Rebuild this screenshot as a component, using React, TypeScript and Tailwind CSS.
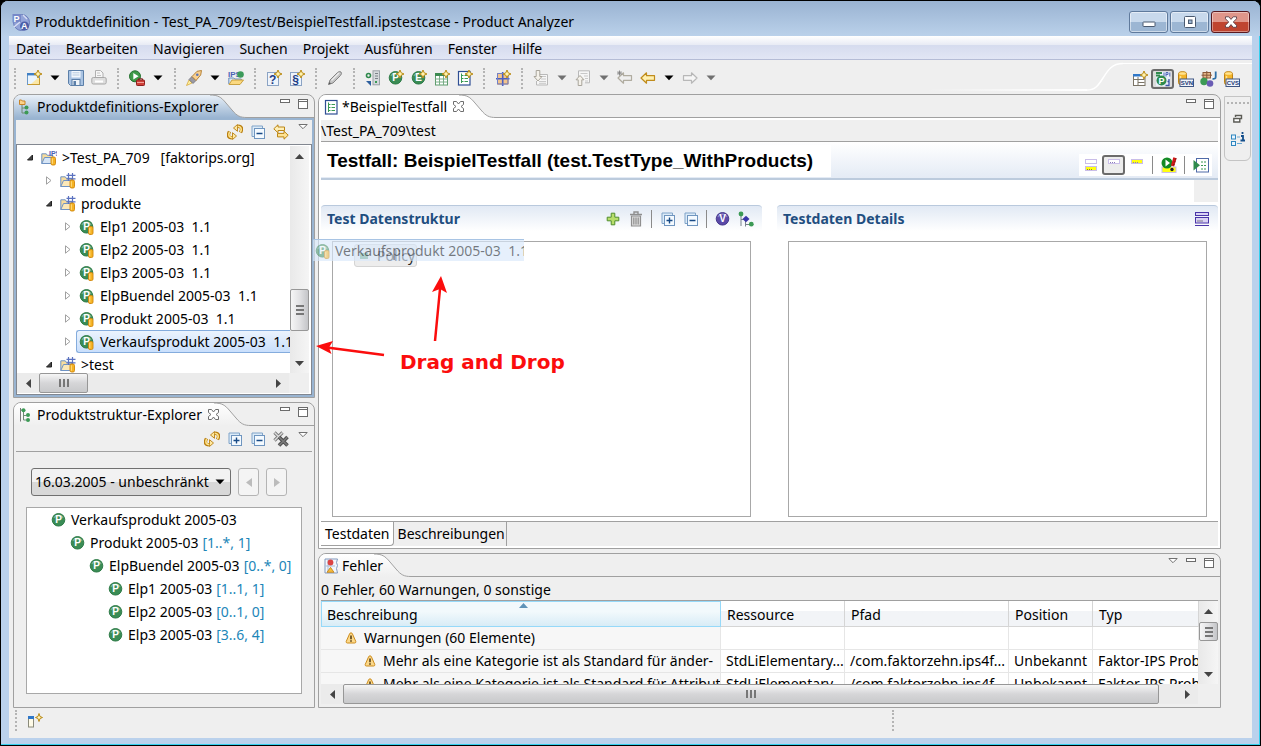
import { useId, type ReactNode } from "react";

/* ---------- icon helpers ---------- */

function Svg({ children, w = 16, h = 16 }: { children: ReactNode; w?: number; h?: number }) {
  return (
    <svg width={w} height={h} viewBox={`0 0 ${w} ${h}`} fill="none" aria-hidden="true" className="shrink-0">
      {children}
    </svg>
  );
}

const Spark = () => (
  <path d="M12 0 13.200 2.800 16 4 13.200 5.200 12 8 10.800 5.200 8 4 10.800 2.800Z" fill="#fff3b0" stroke="#b98a14" strokeWidth="1" />
);

const Cylinder = ({ x = 9, y = 7 }: { x?: number; y?: number }) => (
  <g transform={`translate(${x} ${y})`}>
    <rect x=".5" y=".5" width="4.500" height="8" rx="1.500" fill="#f5b324" stroke="#d0860c" strokeWidth=".9" />
    <path d="M1.800 1.800v5.500" stroke="#ffe08a" />
  </g>
);

function Ball({ letter, color = "#3a8c55", dark = "#26753f", children }: { letter: string; color?: string; dark?: string; children?: ReactNode }) {
  return (
    <Svg>
      <circle cx="7.500" cy="7.800" r="6.300" fill={color} stroke={dark} strokeWidth=".9" />
      <path d="M3 6a5 5 0 0 1 9 0" stroke="#fff" strokeOpacity=".3" strokeWidth="1.400" />
      <text x="7.500" y="11.300" textAnchor="middle" fontSize="10" fontWeight="700" fontFamily="Liberation Sans, sans-serif" fill="#fff">
        {letter}
      </text>
      {children}
    </Svg>
  );
}

const NewWindowIcon = () => (
  <Svg>
    <rect x="1.500" y="4.500" width="12" height="10" fill="#eaf4fd" stroke="#6a98c8" />
    <path d="M2 14.500h11.500V8" stroke="#c79a30" />
    <rect x="1" y="3" width="10" height="2.400" fill="#3f7fc4" />
    <path d="M5 14l8-7v7z" fill="#fbe7a6" />
    <Spark />
  </Svg>
);
const SaveIcon = () => (
  <Svg>
    <path d="M.5 .5h15v15h-13l-2-2z" fill="#a9c3e2" stroke="#5b7fa8" />
    <rect x="3.500" y="1" width="9" height="6.500" fill="#f3f8fd" />
    <path d="M4.500 2.800h7M4.500 5h7" stroke="#b6c9de" />
    <rect x="4" y="9.500" width="8" height="6" fill="#eef3f8" stroke="#5b7fa8" />
    <rect x="5.500" y="11" width="2.500" height="4" fill="#5b7fa8" />
  </Svg>
);
const PrintIcon = () => (
  <Svg>
    <path d="M4.500 7V.5h5l2.500 2.500V7" fill="#f6f6f6" stroke="#b0b0b0" />
    <path d="M6 3h3M6 5.500h4" stroke="#c4c4c4" />
    <rect x=".8" y="7.500" width="14.400" height="6.500" rx="1.500" fill="#dedede" stroke="#a8a8a8" />
    <path d="M4 11.500h8" stroke="#fff" strokeWidth="2" />
  </Svg>
);
const RunIcon = () => (
  <Svg>
    <circle cx="6" cy="6.300" r="5.500" fill="#3f9a48" stroke="#23702e" />
    <path d="M4.300 3 9.500 6.300 4.300 9.600z" fill="#fff" />
    <path d="M9.500 10V8.800h4V10" stroke="#7c1c1c" />
    <rect x="7.500" y="10" width="8" height="5.500" rx=".8" fill="#cf4038" stroke="#8f2020" />
    <path d="M8 12.500h7" stroke="#f0a09a" />
  </Svg>
);
const RocketIcon = () => (
  <Svg>
    <path d="M.5 15.500 3 10l3 3z" fill="#fff2a0" stroke="#d8a93c" strokeWidth=".8" />
    <path d="M3 9.500 6 6.500 10 10.500 7 13.500z" fill="#9a9aa4" stroke="#6d6d76" strokeWidth=".8" />
    <path d="M6 6.500 11 1.300 15.500.5l-.8 4.500L10 10.500z" fill="#f8d090" stroke="#b07a2c" strokeWidth=".9" />
    <circle cx="11.300" cy="4.700" r="1.300" fill="#5b74b8" />
  </Svg>
);
const IpsOpenIcon = () => (
  <Svg>
    <text x="0" y="7" fontSize="8" fontWeight="700" fontFamily="Liberation Sans, sans-serif" fill="#4a62b4">IPS</text>
    <circle cx="12.500" cy="4.500" r="3.300" fill="#3c9a5a" />
    <path d="M.8 14V8h5l1 1h6.500v2" fill="#d9e6f4" stroke="#5b84b6" strokeWidth=".9" />
    <path d="M1 14.500 4 10h11.500L12 14.500z" fill="#fbd980" stroke="#c49a34" strokeWidth=".9" />
  </Svg>
);
const LetterDoc = ({ letter }: { letter: string }) => (
  <Svg>
    <rect x="1.500" y="2.500" width="11" height="13" fill="#eef4fc" stroke="#8ba3c4" />
    <text x="6.700" y="13.500" textAnchor="middle" fontSize="12" fontWeight="700" fontFamily="Liberation Sans, sans-serif" fill="#1f3f86">{letter}</text>
    <Spark />
  </Svg>
);
const PenIcon = () => (
  <Svg>
    <path d="M1.500 14.500 3 10 10.500 2.500q2-1.800 3.500-.5 1.300 1.500-.5 3.500L6 13z" fill="#c4c4c4" stroke="#858585" />
    <path d="M4.500 10.500 12 3" stroke="#eee" strokeWidth="1.200" />
    <path d="M1.500 14.500l2.500-.9-1.400-1.500z" fill="#555" />
  </Svg>
);
const ServerIcon = () => (
  <Svg>
    <rect x="8" y=".8" width="6.500" height="14" fill="#d5d9dc" stroke="#9ca2a8" />
    <path d="M10 3.500h3M10 6h3M10 8.500h3" stroke="#7b8288" />
    <path d="M10 11h2v2h-2z" fill="#3a9a55" />
    <circle cx="3.500" cy="5.500" r="2" stroke="#2f8a4d" strokeWidth="1.600" />
    <path d="M1 11h5v5z" fill="#2d5f9e" />
  </Svg>
);
const TableIcon = () => (
  <Svg>
    <rect x="1.500" y="3.500" width="12" height="11.500" fill="#fff" stroke="#5c9c6c" />
    <rect x="1" y="3" width="13" height="3" fill="#3c8a50" />
    <path d="M1.500 9h12M1.500 12h12M5.500 6v9M9.500 6v9" stroke="#79ad86" />
    <Spark />
  </Svg>
);
const FormIcon = ({ spark = false }: { spark?: boolean }) => (
  <Svg>
    <rect x="1.500" y="1.500" width="11.500" height="13.500" fill="#fff" stroke="#2f4f94" strokeWidth="1.200" />
    <path d="M4.500 3.500v9.500M4.500 5.500h2M4.500 8.500h2M4.500 11.500h2" stroke="#3a9a55" />
    <path d="M7.500 5.500h3.500M7.500 8.500h3.500M7.500 11.500h3.500" stroke="#3a9a55" strokeWidth="1.200" />
    {spark && <Spark />}
  </Svg>
);
const GridIcon = () => (
  <Svg>
    <rect x="2.500" y="3.500" width="10.500" height="10.500" fill="#f3c48c" stroke="#c98a50" />
    <path d="M7.700 2v14M1 8.800h13.500" stroke="#4a5fc0" strokeWidth="1.600" />
    <path d="M2.500 3.500h10.500v10.500H2.500z" stroke="#6f80cc" />
    <Spark />
  </Svg>
);
const DocArrow = ({ up = false }: { up?: boolean }) => (
  <Svg>
    <path d={up ? "M3.500 7V.8h11v12H10" : "M6 4.500h8.500V15H3.500V11"} fill="#f6f6f6" stroke="#b9b9b9" />
    <path d={up ? "M5.500 3.500h7M9 6h4M10 8.500h3M10 11h3" : "M8 6.500h5M8 9h5M6 11.500h7M6 13.300h7"} stroke="#c8c8c8" />
    <path d={up ? "M5 5.500 9 9.800H6.800V15.500H3.200V9.800H1z" : "M3.200 .5h3.600v6H9L5 11 1 6.500h2.200z"} fill="#f4f1ea" stroke="#a8a49a" />
  </Svg>
);
const Arrow = ({ dir, color, fill, star }: { dir: "l" | "r"; color: string; fill: string; star?: boolean }) => (
  <Svg>
    <path d={dir === "l" ? "M1 8 6.500 2.800v2.900h8v4.600h-8v2.900z" : "M15 8 9.500 2.800v2.900h-8v4.600h8v2.900z"} fill={fill} stroke={color} strokeWidth="1.200" strokeLinejoin="round" />
    {star && <path d="M2.500 .5v5M0 3h5M.8 1.300l3.400 3.400M4.200 1.300.8 4.700" stroke="#808080" strokeWidth=".9" />}
  </Svg>
);
const PerspectiveIcon = () => (
  <Svg>
    <rect x="1.500" y="3.500" width="11.500" height="11" fill="#fff" stroke="#7b7466" />
    <rect x="1" y="3" width="9" height="2.500" fill="#2f77c8" />
    <path d="M2 8.500h10.500M6 6v8.500M6 11.500h6.500" stroke="#7b7466" />
    <Spark />
  </Svg>
);
const ProductPerspective = () => (
  <Svg>
    <rect x="1" y="1" width="14" height="14" fill="#e8effa" />
    <path d="M1 2h6M1 4.500h4" stroke="#2f8a4d" strokeWidth="1.800" />
    <path d="M9 1.500v4M11 5.500V1.500h2v2h-2M14.800 1.500v4" stroke="#5068b8" />
    <circle cx="6.500" cy="9.500" r="5" fill="#2f8a4d" />
    <text x="6.500" y="12.800" textAnchor="middle" fontSize="9" fontWeight="700" fontFamily="Liberation Sans, sans-serif" fill="#fff">P</text>
    <path d="M14 8v6.500h-3.500M14 10.500h-1.500" stroke="#3c53a4" strokeWidth="1.300" />
  </Svg>
);
const DbIcon = ({ label }: { label: string }) => (
  <Svg w={17}>
    <rect x="1.500" y=".8" width="8" height="13" rx="2.500" fill="#f4b52a" stroke="#c08212" />
    <ellipse cx="5.500" cy="2.500" rx="3.500" ry="1.300" fill="#ffe28e" />
    <path d="M3.500 5v7" stroke="#ffe28e" strokeWidth="1.500" />
    <rect x="3" y="8" width="13.500" height="7.500" fill="#f0f4fb" stroke="#3f5684" />
    <text x="9.800" y="14" textAnchor="middle" fontSize="6" fontWeight="700" fontFamily="Liberation Sans, sans-serif" fill="#1d3a74">{label}</text>
  </Svg>
);
const JavaIcon = () => (
  <Svg w={17}>
    <rect x="3" y="1.500" width="7.500" height="5.500" fill="#e6b98c" stroke="#8a5a3a" />
    <path d="M6.800 0v8M1.500 4.200H12" stroke="#8a5a3a" />
    <circle cx="4" cy="10.500" r="3.700" fill="#3c9a55" />
    <circle cx="10" cy="12.500" r="3.300" fill="#6a5cb4" />
    <path d="M15.700 .5v5.500q0 2.200-3.200 1.800" stroke="#2d6fa8" strokeWidth="1.800" />
  </Svg>
);
const TreeTabIcon = ({ folder = false }: { folder?: boolean }) => (
  <Svg>
    {folder ? <path d="M.5 1h2l.8 1H6v3.500H.5z" fill="#fbd28a" stroke="#c78326" /> : <path d="M1.500 1v13.500" stroke="#7b7b7b" />}
    <path d={folder ? "M3 6v8h3M3 9h3" : "M2 3h3M4.500 3v10h3M4.500 8.500h3"} stroke="#6d8a74" />
    <circle cx={folder ? 7.500 : 4.500} cy={folder ? 8.500 : 3.300} r="2" fill="#3c9a55" />
    <circle cx={folder ? 7.500 : 9} cy={folder ? 13.500 : 8} r="2" fill="#3c9a55" />
    {!folder && <circle cx="9" cy="13" r="2" fill="#3c9a55" />}
  </Svg>
);
const RefreshIcon = () => (
  <Svg>
    <g stroke="#b97f12" strokeLinejoin="round">
      <path d="M13.500 8.500Q16.500 2.500 11 2.200" strokeWidth="3.400" />
      <path d="M10.500 .5v6.800L6.500 4z" fill="#ffe9a0" strokeWidth=".9" />
      <path d="M2.500 7.500Q-.5 13.500 5 13.800" strokeWidth="3.400" />
      <path d="M5.500 15.500V8.700L9.500 12z" fill="#ffe9a0" strokeWidth=".9" />
    </g>
    <path d="M13.500 8Q15.800 3 10.800 2.300M2.500 8Q.2 13 5.200 13.700" stroke="#ffe48c" strokeWidth="1.600" />
  </Svg>
);
const BoxesIcon = ({ plus = false }: { plus?: boolean }) => (
  <Svg>
    <path d="M4 12.500H2V2h10.500v2" fill="#dcebf8" stroke="#7fa3c8" />
    <rect x="4.500" y="4.500" width="10" height="10" fill="#f4faff" stroke="#6f95bf" />
    <path d={plus ? "M6.500 9.500h6M9.500 6.500v6" : "M6.500 9.500h6"} stroke="#174a86" strokeWidth="1.400" />
  </Svg>
);
const LinkIcon = () => (
  <Svg>
    <path d="M.8 4.800 5 .8v2.200h6.500v3.500H5v2.300z" fill="#fff0b8" stroke="#bb8514" strokeLinejoin="round" />
    <path d="M15.200 11.200 11 7.200v2.200H4.500v3.500H11v2.300z" fill="#ffe394" stroke="#bb8514" strokeLinejoin="round" />
  </Svg>
);
const RemoveAllIcon = () => (
  <Svg>
    <path d="M1.500 1.500l8 8M9.500 1.500l-8 8" stroke="#7b7b7b" strokeWidth="3.200" />
    <path d="M1.500 1.500l8 8M9.500 1.500l-8 8" stroke="#dcdcdc" strokeWidth="1.400" />
    <path d="M6 6l8.500 8.500M14.500 6 6 14.500" stroke="#4f4f4f" strokeWidth="3.600" />
    <path d="M6 6l8.500 8.500M14.500 6 6 14.500" stroke="#7c7c7c" strokeWidth="1.600" />
  </Svg>
);
const MenuTriangle = () => (
  <Svg w={10} h={6}><path d="M.8 .5h8.400L5 4.700z" fill="#fff" stroke="#707070" /></Svg>
);
const MinimizeIcon = () => (
  <Svg w={10} h={10}><rect x=".5" y=".5" width="9" height="3" fill="#fff" stroke="#6b6b6b" /></Svg>
);
const MaximizeIcon = () => (
  <Svg w={10} h={10}><rect x=".5" y=".5" width="9" height="9" fill="#fff" stroke="#6b6b6b" /><path d="M1 2.500h8" stroke="#6b6b6b" /></Svg>
);
const CloseX = () => (
  <Svg w={11} h={11}>
    <path d="M.5 .5h3l2 2.500 2-2.500h3v3L8 5.500l2.500 2v3h-3L5.500 8l-2 2.500h-3v-3L3 5.500.5 3.500z" fill="#fff" stroke="#6d6d6d" />
  </Svg>
);
const FolderIcon = ({ root = false }: { root?: boolean }) => (
  <Svg>
    <path d="M.8 13.500V3.800h4.500l1 1.500h5.500v8.200z" fill="#f7dc9c" stroke="#6f93c4" />
    <path d="M.8 13.500 3.500 7.500h9.500L11 13.500z" fill={root ? "#d6e5f6" : "#fbe8b8"} stroke="#6f93c4" />
    {root ? (
      <text x="8" y="6" fontSize="7" fontWeight="700" fontFamily="Liberation Sans, sans-serif" fill="#4a62b4">IPS</text>
    ) : (
      <path d="M8.500 0v8M12.500 0v8M6.500 2.300h9M6.500 5.800h9" stroke="#5b72c0" strokeWidth="1.200" />
    )}
    <Cylinder x={9.500} y={6.500} />
  </Svg>
);
const PlusIcon = () => (
  <Svg><path d="M6.200 2.200h3.600v4h4v3.600h-4v4H6.200v-4h-4V6.200h4z" fill="#b7dd6a" stroke="#4f8d2c" /></Svg>
);
const TrashIcon = () => (
  <Svg>
    <path d="M2 3.500h12M6 3V1h4v2" stroke="#8f8f8f" strokeWidth="1.400" />
    <path d="M3.500 5h9v10h-9z" fill="#dcdcdc" stroke="#8f8f8f" strokeWidth="1.200" />
    <path d="M5.800 6.500v7M8 6.500v7M10.200 6.500v7" stroke="#8f8f8f" strokeWidth="1.200" />
  </Svg>
);
const DiagramIcon = () => (
  <Svg>
    <path d="M3 4v11M3 8.500h5M7.500 9v6.500M7.500 13.500H12" stroke="#77808c" />
    <circle cx="3" cy="3" r="2.400" fill="#3c9a55" />
    <path d="M8 4.700 11.500 8 8 11.300 4.500 8z" fill="#3a35a8" />
    <circle cx="13.300" cy="13.200" r="2.400" fill="#3c9a55" />
  </Svg>
);
const PanelIcon = ({ top, bottom }: { top?: string; bottom?: string }) => (
  <Svg>
    {top && <rect x="2.500" y="2.500" width="11" height="4" fill={top} stroke="#c9bde8" />}
    {bottom && <rect x="2.500" y="9.500" width="11" height="4" fill={bottom} stroke="#c9bde8" />}
    {bottom && <path d="M4 12.500h5" stroke="#8a7a30" strokeDasharray="1 1" />}
    {top && !bottom && <path d="M4 5.500h5" stroke="#8a7ab8" strokeDasharray="1 1" />}
  </Svg>
);
const RunTestIcon = () => (
  <Svg>
    <rect x="1" y="10" width="14" height="5.500" fill="#ffff10" stroke="#c9bde8" />
    <circle cx="6" cy="6" r="5.500" fill="#128a24" />
    <path d="M4.500 2.500 9 6l-4.500 3.500z" fill="#fff" />
    <path d="M14 .8 11.500 9" stroke="#d01818" strokeWidth="3.400" />
    <path d="M15 1.500 12.500 9" stroke="#401010" strokeDasharray="1 2" />
    <circle cx="11" cy="12.500" r="1.700" fill="#222" />
  </Svg>
);
const ImportIcon = () => (
  <Svg>
    <rect x="3.500" y="1.500" width="12" height="13.500" fill="#fff" stroke="#4f6aa8" />
    <path d="M8 5h5.500M8 8.500h5.500M8 12h5.500" stroke="#3a9a55" strokeDasharray="2 1" />
    <path d="M.5 3 7 8.300.5 13.500z" fill="#2f8a4d" />
  </Svg>
);
const SectionMenuIcon = () => (
  <Svg>
    <rect x="1.500" y="1.500" width="13" height="3" fill="#d9d2f4" stroke="#4a35a8" />
    <rect x="1.500" y="6.500" width="13" height="5.500" fill="#d9d2f4" stroke="#4a35a8" />
    <path d="M3.500 10h6" stroke="#222" strokeDasharray="1 1" />
    <path d="M1 14.500h14" stroke="#4a35a8" />
  </Svg>
);
const ProblemsIcon = () => (
  <Svg>
    <path d="M1 1h12.500l-1 3.500 1 3-1 3 1 4.500H1z" fill="#f2f6fc" stroke="#8399bd" />
    <path d="M4 1.500v13.500M1.500 8H11" stroke="#a9bad4" />
    <circle cx="6.500" cy="4.500" r="2.900" fill="#dc4444" />
    <path d="M6.500 9.300l3.500 5H3z" fill="#f6bc3c" stroke="#c07f14" strokeWidth=".8" />
  </Svg>
);
const WarningIcon = () => (
  <Svg w={12} h={12}>
    <path d="M6 .8Q7 .8 7.500 2L10.800 9.500Q11 11 9.700 11H2.300Q1 11 1.200 9.500L4.500 2Q5 .8 6 .8z" fill="#fcd98a" stroke="#cc8b1c" />
    <path d="M6 3.500v3.700M6 8.300v1.400" stroke="#4a3410" strokeWidth="1.500" />
  </Svg>
);
const AppIcon = () => (
  <Svg w={18} h={18}>
    <circle cx="9.500" cy="9.500" r="8" fill="#93a4d8" stroke="#6b7cba" />
    <path d="M.5 1h8.500v8.500H.5z" fill="#7688c8" />
    <path d="M2 14l6-5M11 2l4 4" stroke="#d8def4" strokeWidth="1.400" />
    <circle cx="12.500" cy="13" r="4.500" fill="#4c5ea8" />
    <text x="1.500" y="8.500" fontSize="9" fontWeight="700" fontFamily="Liberation Sans, sans-serif" fill="#fff">P</text>
    <text x="9" y="16" fontSize="9" fontWeight="700" fontFamily="Liberation Sans, sans-serif" fill="#fff">A</text>
  </Svg>
);

/* ---------- small building blocks ---------- */

function Tool({ label, children }: { label: string; children: ReactNode }) {
  return (
    <button type="button" aria-label={label} className="flex h-[22px] w-[23px] shrink-0 items-center justify-center">
      {children}
    </button>
  );
}

function Drop({ label, muted = false }: { label: string; muted?: boolean }) {
  return (
    <button type="button" aria-label={label} className="flex h-[22px] w-[19px] shrink-0 items-center justify-center">
      <Svg w={10} h={6}><path d="M.5 .5h9L5 5.200z" fill={muted ? "#707070" : "#000"} /></Svg>
    </button>
  );
}

const Grip = () => (
  <span className="flex w-[15px] shrink-0 justify-center">
    <span className="h-[21px] border-l-2 border-dotted border-[#b4b4b4]" />
  </span>
);

const Divider = () => (
  <span className="flex w-[9px] shrink-0 justify-center">
    <span className="h-[18px] w-px bg-[#8a8a8a]" />
  </span>
);

type Tone = "active" | "plain" | "soft";
const TAB_FILL: Record<Tone, string> = {
  active: "bg-linear-to-b from-[#e9f0f8] to-[#99b4d1]",
  plain: "bg-white",
  soft: "bg-linear-to-b from-white to-[#efefef]",
};
const TAB_STOPS: Record<Tone, [string, string]> = {
  active: ["#e9f0f8", "#99b4d1"],
  plain: ["#ffffff", "#ffffff"],
  soft: ["#ffffff", "#efefef"],
};

function Pane({ icon, title, closable, tone, menu, className, children }: {
  icon: ReactNode; title: string; closable?: boolean; tone: Tone; menu?: boolean; className: string; children: ReactNode;
}) {
  const id = useId();
  const [from, to] = TAB_STOPS[tone];
  return (
    <section aria-label={title} className={`flex min-h-0 flex-col overflow-hidden rounded-t-lg border border-[#a0a0a0] bg-[#efefef] ${className}`}>
      <header className="flex h-[23px] shrink-0">
        <div className="grid shrink-0">
          <div className="flex [grid-area:1/1]">
            <div className={`flex-1 ${TAB_FILL[tone]}`} />
            <svg width="37" height="23" viewBox="0 0 37 23" fill="none" aria-hidden="true">
              <defs>
                <linearGradient id={id} x1="0" y1="0" x2="0" y2="1">
                  <stop stopColor={from} />
                  <stop offset="1" stopColor={to} />
                </linearGradient>
              </defs>
              <path d="M0 0C8 0 11 2 16 8L22 15C27 21 30 22.500 37 22.500V23H0z" fill={`url(#${id})`} />
              <path d="M0 0C8 0 11 2 16 8L22 15C27 21 30 22.500 37 22.500" stroke="#a0a0a0" />
            </svg>
          </div>
          <div className={`z-10 flex items-center gap-[2px] pl-[5px] [grid-area:1/1] ${closable ? "pr-8" : "pr-7"}`}>
            {icon}
            <h2>{title}</h2>
            {closable && (
              <button type="button" aria-label={`${title} schließen`} className="ml-1"><CloseX /></button>
            )}
          </div>
        </div>
        <div className="flex flex-1 items-start justify-end gap-2 border-b border-[#a0a0a0] pr-[6px] pt-1">
          {menu && <button type="button" aria-label="Ansichtsmenü"><MenuTriangle /></button>}
          <button type="button" aria-label="Minimieren"><MinimizeIcon /></button>
          <button type="button" aria-label="Maximieren"><MaximizeIcon /></button>
        </div>
      </header>
      {children}
    </section>
  );
}

const Tip = ({ d }: { d: string }) => <Svg w={9} h={9}><path d={d} fill="#444" /></Svg>;

function VScroll({ before, thumb, after }: { before: string; thumb: string; after: string }) {
  return (
    <div className="flex w-[19px] shrink-0 flex-col items-stretch bg-linear-to-r from-[#e9e9e9] to-[#f5f5f5]">
      <span className="flex h-5 shrink-0 items-center justify-center"><Tip d="M4.500 2 9 7H0z" /></span>
      <span className={before} />
      <span className={`flex shrink-0 flex-col items-center justify-center gap-[2px] rounded-xs border border-[#979797] bg-linear-to-r from-[#f6f6f6] via-[#e2e2e4] to-[#c4c5c8] ${thumb}`}>
        <i className="h-[2px] w-2 bg-[#777]" /><i className="h-[2px] w-2 bg-[#777]" /><i className="h-[2px] w-2 bg-[#777]" />
      </span>
      <span className={after} />
      <span className="flex h-5 shrink-0 items-center justify-center"><Tip d="M4.500 7 9 2H0z" /></span>
    </div>
  );
}

function HScroll({ thumb, after }: { thumb: string; after: string }) {
  return (
    <div className="flex h-5 shrink-0 items-stretch bg-[#efefef] pr-5">
      <span className="flex w-[22px] shrink-0 items-center justify-center bg-[#ebebeb]"><Tip d="M2 4.500 7 0v9z" /></span>
      <span className={`flex items-center justify-center gap-[2px] rounded-xs border border-[#979797] bg-linear-to-b from-[#f6f6f6] via-[#d6d6d8] to-[#c8c9cb] ${thumb}`}>
        <i className="h-2 w-[2px] bg-[#777]" /><i className="h-2 w-[2px] bg-[#777]" /><i className="h-2 w-[2px] bg-[#777]" />
      </span>
      <span className={`bg-[#ebebeb] ${after}`} />
      <span className="flex w-[22px] shrink-0 items-center justify-center bg-[#ebebeb]"><Tip d="M7 4.500 2 0v9z" /></span>
    </div>
  );
}

/* ---------- data ---------- */

const MENUS = ["Datei", "Bearbeiten", "Navigieren", "Suchen", "Projekt", "Ausführen", "Fenster", "Hilfe"];

type Node = { text: string; depth: 0 | 1 | 2; kind: "root" | "folder" | "product"; open?: boolean; selected?: boolean };
const TREE: Node[] = [
  { text: ">Test_PA_709   [faktorips.org]", depth: 0, kind: "root", open: true },
  { text: "modell", depth: 1, kind: "folder" },
  { text: "produkte", depth: 1, kind: "folder", open: true },
  { text: "Elp1 2005-03  1.1", depth: 2, kind: "product" },
  { text: "Elp2 2005-03  1.1", depth: 2, kind: "product" },
  { text: "Elp3 2005-03  1.1", depth: 2, kind: "product" },
  { text: "ElpBuendel 2005-03  1.1", depth: 2, kind: "product" },
  { text: "Produkt 2005-03  1.1", depth: 2, kind: "product" },
  { text: "Verkaufsprodukt 2005-03  1.1", depth: 2, kind: "product", selected: true },
  { text: ">test", depth: 1, kind: "folder", open: true },
];
const TREE_PAD = ["pl-[5px]", "pl-[24px]", "pl-[43px]"];

const STRUCTURE: { text: string; range?: string; pad: string }[] = [
  { text: "Verkaufsprodukt 2005-03", pad: "pl-[24px]" },
  { text: "Produkt 2005-03", range: "[1..*, 1]", pad: "pl-[43px]" },
  { text: "ElpBuendel 2005-03", range: "[0..*, 0]", pad: "pl-[62px]" },
  { text: "Elp1 2005-03", range: "[1..1, 1]", pad: "pl-[81px]" },
  { text: "Elp2 2005-03", range: "[0..1, 0]", pad: "pl-[81px]" },
  { text: "Elp3 2005-03", range: "[3..6, 4]", pad: "pl-[81px]" },
];

const PROBLEMS = [
  "Mehr als eine Kategorie ist als Standard für änder-",
  "Mehr als eine Kategorie ist als Standard für Attribute",
];

/* ---------- regions ---------- */

function TitleBar() {
  const glass = "flex h-[22px] w-[39px] items-center justify-center rounded-[3px] border border-[#5f7a9c] bg-linear-to-b from-[#c8d9ec] from-50% to-[#9cb6d3] to-50% shadow-[inset_0_0_0_1px_rgba(255,255,255,0.5)]";
  return (
    <header className="-mx-2 flex h-[35px] shrink-0 items-center bg-linear-to-b from-[#9ab3d2] to-[#bad1ea] pl-[11px] pr-[10px] pt-[7px]">
      <AppIcon />
      <h1 className="ml-[5px] flex-1">Produktdefinition - Test_PA_709/test/BeispielTestfall.ipstestcase - Product Analyzer</h1>
      <div className="flex gap-[2px]">
        <button type="button" aria-label="Fenster minimieren" className={glass}>
          <Svg w={14} h={12}><rect x="1" y="6" width="12" height="4.500" rx=".5" fill="#fff" stroke="#4a5a70" /></Svg>
        </button>
        <button type="button" aria-label="Fenster maximieren" className={glass}>
          <Svg w={14} h={12}><rect x="1.500" y=".5" width="11" height="11" rx="1" fill="#fff" stroke="#4a5a70" /><rect x="5.500" y="4" width="3.500" height="3.500" fill="#9cb6d3" stroke="#4a5a70" /></Svg>
        </button>
        <button type="button" aria-label="Fenster schließen" className="flex h-[22px] w-[39px] items-center justify-center rounded-[3px] border border-[#5a1a20] bg-linear-to-b from-[#e0968a] from-50% to-[#bf4430] to-50% shadow-[inset_0_0_0_1px_rgba(255,255,255,0.4)]">
          <Svg w={14} h={12}>
            <path d="M1.500 .8h3.300L7 3.400 9.200.8h3.300v2L9.300 6l3.200 3.300v2H9.200L7 8.600l-2.200 2.700H1.500v-2L4.700 6 1.500 2.800z" fill="#fff" stroke="#5a4048" strokeWidth=".9" />
          </Svg>
        </button>
      </div>
    </header>
  );
}

function Toolbar() {
  return (
    <div className="flex h-[34px] shrink-0">
      <div role="toolbar" aria-label="Werkzeugleiste" className="-ml-[2px] flex flex-1 items-center pt-[2px]">
        <Grip />
        <Tool label="Neu"><NewWindowIcon /></Tool><Drop label="Neu Auswahl" />
        <Tool label="Speichern"><SaveIcon /></Tool>
        <Tool label="Drucken"><PrintIcon /></Tool>
        <Grip />
        <Tool label="Ausführen"><RunIcon /></Tool><Drop label="Ausführen Auswahl" />
        <Grip />
        <Tool label="Suchen"><RocketIcon /></Tool><Drop label="Suchen Auswahl" />
        <Tool label="IPS-Objekt öffnen"><IpsOpenIcon /></Tool>
        <Grip />
        <Tool label="Neue Anfrage"><LetterDoc letter="?" /></Tool>
        <Tool label="Neue Regel"><LetterDoc letter="§" /></Tool>
        <Grip />
        <Tool label="Bearbeiten"><PenIcon /></Tool>
        <Grip />
        <Tool label="Synchronisieren"><ServerIcon /></Tool>
        <Tool label="Neues Produkt"><Ball letter="P"><Spark /></Ball></Tool>
        <Tool label="Neues Element"><Ball letter="E"><Spark /></Ball></Tool>
        <Tool label="Neue Tabelle"><TableIcon /></Tool>
        <Tool label="Neuer Testfall"><FormIcon spark /></Tool>
        <Grip />
        <Tool label="Neues Paket"><GridIcon /></Tool>
        <Grip />
        <Tool label="Nächste Anmerkung"><DocArrow /></Tool><Drop muted label="Nächste Anmerkung Auswahl" />
        <Tool label="Vorherige Anmerkung"><DocArrow up /></Tool><Drop muted label="Vorherige Anmerkung Auswahl" />
        <Tool label="Letzte Bearbeitung"><Arrow dir="l" color="#b0aca0" fill="#efefef" star /></Tool>
        <Tool label="Zurück"><Arrow dir="l" color="#c08c1c" fill="#fff0b0" /></Tool><Drop label="Zurück Auswahl" />
        <Tool label="Vorwärts"><Arrow dir="r" color="#b8b8b8" fill="#f6f6f6" /></Tool><Drop muted label="Vorwärts Auswahl" />
      </div>
      <div className="flex pt-[2px]">
        <span className="mb-[3px] h-[29px] w-40 bg-linear-to-r from-[#efefef] to-white [clip-path:inset(27px_0_0_0)]" />
        <svg width="36" height="30" viewBox="0 0 36 30" fill="none" aria-hidden="true">
          <path d="M0 28C8 28 11 24 16 16S25 1.500 36 1.500" stroke="#fff" strokeWidth="1.500" />
        </svg>
      </div>
      <div role="toolbar" aria-label="Perspektiven" className="mt-[3px] flex items-center border-t border-white pl-[5px] pr-[9px]">
        <Tool label="Perspektive öffnen"><PerspectiveIcon /></Tool>
        <button type="button" aria-label="Produktdefinition" aria-pressed="true" className="flex h-5 w-[23px] items-center justify-center rounded-[3px] border-2 border-[#6b6b6b] bg-[#dcdcdc]"><ProductPerspective /></button>
        <Tool label="SVN"><DbIcon label="SVN" /></Tool>
        <Tool label="Java"><JavaIcon /></Tool>
        <Tool label="CVS"><DbIcon label="CVS" /></Tool>
      </div>
    </div>
  );
}

function DefinitionExplorer() {
  return (
    <Pane icon={<TreeTabIcon folder />} title="Produktdefinitions-Explorer" tone="active" className="flex-[304]">
      <div className="flex min-h-0 flex-1 flex-col border-2 border-[#99b4d1]">
        <div className="flex h-[24px] shrink-0 items-center justify-end pr-1">
          <Tool label="Aktualisieren"><RefreshIcon /></Tool>
          <Tool label="Alle zuklappen"><BoxesIcon /></Tool>
          <Tool label="Mit Editor verknüpfen"><LinkIcon /></Tool>
          <button type="button" aria-label="Ansichtsmenü" className="self-start pl-[6px] pt-1"><MenuTriangle /></button>
        </div>
        <div className="flex min-h-0 flex-1 flex-col border border-[#828790] bg-white pb-px pr-[2px]">
          <div className="flex min-h-0 flex-1 pt-px">
            <ul role="tree" aria-label="Produktdefinitionen" className="min-w-0 flex-1 overflow-hidden">
              {TREE.map((n) => (
                <li key={n.text} role="treeitem" aria-expanded={!!n.open} aria-selected={!!n.selected} className={`flex h-[23px] items-center whitespace-pre ${TREE_PAD[n.depth]}`}>
                  <span className="flex w-4 shrink-0 justify-center">
                    <Svg w={8} h={9}>
                      {n.open ? <path d="M6.500 2v5H1.500z" fill="#444" stroke="#222" /> : <path d="M1.500 .8 6 4.500 1.500 8.200z" fill="#fff" stroke="#a0a0a0" />}
                    </Svg>
                  </span>
                  <span className={`flex h-[23px] flex-1 items-center gap-[5px] rounded-l-[3px] border border-r-0 pl-[2px] ${n.selected ? "border-[#84acdd] bg-linear-to-b from-[#ebf3fd] to-[#c9dffc]" : "border-transparent"}`}>
                    {n.kind === "product" ? <Ball letter="P"><Cylinder /></Ball> : <FolderIcon root={n.kind === "root"} />}
                    {n.text}
                  </span>
                </li>
              ))}
            </ul>
            <VScroll before="flex-[124]" thumb="h-[42px]" after="flex-[22]" />
          </div>
          <HScroll thumb="w-[49px] shrink-0" after="flex-1" />
        </div>
      </div>
    </Pane>
  );
}

function StructureExplorer() {
  return (
    <Pane icon={<TreeTabIcon />} title="Produktstruktur-Explorer" closable tone="soft" className="flex-[306]">
      <div className="mx-[2px] flex h-[26px] shrink-0 items-center justify-end border-b border-[#a0a0a0] pr-1">
        <Tool label="Aktualisieren"><RefreshIcon /></Tool>
        <Tool label="Alle aufklappen"><BoxesIcon plus /></Tool>
        <Tool label="Alle zuklappen"><BoxesIcon /></Tool>
        <Tool label="Alle entfernen"><RemoveAllIcon /></Tool>
        <button type="button" aria-label="Ansichtsmenü" className="self-start pl-[6px] pt-[6px]"><MenuTriangle /></button>
      </div>
      <div className="mx-[17px] mt-4 flex shrink-0 items-center gap-[7px]">
        <div className="grid w-[200px] items-center">
          <select aria-label="Gültigkeitszeitraum" className="h-7 appearance-none rounded-[3px] border border-[#707070] bg-linear-to-b from-[#f2f2f2] from-50% to-[#d8d8d8] to-50% pl-[3px] [grid-area:1/1]">
            <option>16.03.2005 - unbeschränkt</option>
          </select>
          <span className="pointer-events-none mr-[6px] justify-self-end [grid-area:1/1]">
            <Svg w={10} h={6}><path d="M.5 .5h9L5 5.200z" fill="#000" /></Svg>
          </span>
        </div>
        <button type="button" aria-label="Vorheriger Zeitraum" className="flex h-7 w-[21px] items-center justify-center rounded-[3px] border border-[#b4b4b4] bg-[#f4f4f4]"><Svg w={6} h={9}><path d="M6 0v9L0 4.500z" fill="#bcbcbc" /></Svg></button>
        <button type="button" aria-label="Nächster Zeitraum" className="flex h-7 w-[21px] items-center justify-center rounded-[3px] border border-[#b4b4b4] bg-[#f4f4f4]"><Svg w={6} h={9}><path d="M0 0v9l6-4.500z" fill="#bcbcbc" /></Svg></button>
      </div>
      <ul role="tree" aria-label="Produktstruktur" className="mx-3 mb-[13px] mt-[11px] min-h-0 flex-1 overflow-hidden border border-[#a8a8a8] bg-white">
        {STRUCTURE.map((s) => (
          <li key={s.text} role="treeitem" className={`flex h-[23px] items-center gap-1 ${s.pad}`}>
            <Ball letter="P" />
            <span>{s.text}</span>
            <span className="text-[#1c86b8]">{s.range}</span>
          </li>
        ))}
      </ul>
    </Pane>
  );
}

function FormSection({ title, tools, children }: { title: string; tools: ReactNode; children?: ReactNode }) {
  return (
    <section className="flex min-w-0 flex-1 flex-col">
      <header className="flex h-[26px] shrink-0 items-center rounded-t border-t border-[#b9c9dd] bg-linear-to-b from-[#e1e9f4] to-white pl-[6px] pr-[5px]">
        <h3 className="flex-1 font-bold text-[#1f4e80]">{title}</h3>
        {tools}
      </header>
      <div className="mx-[11px] mt-[10px] min-h-0 flex-1 border border-[#a8a8a8] bg-white">{children}</div>
    </section>
  );
}

function Editor() {
  return (
    <Pane icon={<FormIcon />} title="*BeispielTestfall" closable tone="plain" className="flex-1">
      <div className="flex min-h-0 flex-1 flex-col border-2 border-white bg-white">
        <p className="h-[22px] shrink-0 border-b border-[#a0a0a0] bg-[#efefef] leading-[21px]">\Test_PA_709\test</p>
        <div className="flex h-[38px] shrink-0 items-center border-b-2 border-[#bccbdd] bg-linear-to-b from-white to-[#e4ebf5] pr-[6px] pt-[2px]">
          <h3 className="h-8 bg-white pl-[6px] pr-[18px] font-['Liberation_Sans',sans-serif] text-[19px] font-bold leading-[31px]">
            Testfall: BeispielTestfall (test.TestType_WithProducts)
          </h3>
          <div role="toolbar" aria-label="Testfall" className="ml-auto mt-2 flex h-[22px] items-center bg-white">
            <Tool label="Alle anzeigen"><PanelIcon top="#fff" bottom="#ffff10" /></Tool>
            <button type="button" aria-label="Eingaben anzeigen" aria-pressed="true" className="flex h-5 w-[23px] items-center justify-center rounded-[3px] border-2 border-[#6b6b6b] bg-[#ececec]"><PanelIcon top="#fff" /></button>
            <Tool label="Erwartete Ergebnisse anzeigen"><PanelIcon top="#ffff10" /></Tool>
            <Divider />
            <Tool label="Test ausführen"><RunTestIcon /></Tool>
            <Divider />
            <Tool label="Ergebnisse übernehmen"><ImportIcon /></Tool>
          </div>
        </div>
        <div className="flex h-[25px] shrink-0 justify-end"><span className="h-[22px] w-6 bg-[#efefef]" /></div>
        <div className="flex min-h-0 flex-1 gap-[15px] pb-1">
          <FormSection
            title="Test Datenstruktur"
            tools={
              <>
                <Tool label="Hinzufügen"><PlusIcon /></Tool>
                <Tool label="Löschen"><TrashIcon /></Tool>
                <Divider />
                <Tool label="Alle aufklappen"><BoxesIcon plus /></Tool>
                <Tool label="Alle zuklappen"><BoxesIcon /></Tool>
                <Divider />
                <Tool label="Vertragsteiltypen"><Ball letter="V" color="#5b4aa8" dark="#3f3186" /></Tool>
                <Tool label="Beziehungen"><DiagramIcon /></Tool>
              </>
            }
          >
            <span className="ml-[21px] mt-[2px] inline-flex h-[23px] items-center gap-[3px] rounded-[3px] border border-[#d4d4d4] bg-[#ededed] pr-px text-[#222]">
              <Svg w={19}><path d="M5 5h8v6H5z" fill="#5fa07a" /></Svg>
              Policy
            </span>
          </FormSection>
          <FormSection title="Testdaten Details" tools={<Tool label="Anzeige"><SectionMenuIcon /></Tool>} />
        </div>
        <div role="tablist" aria-label="Editorseiten" className="flex h-[25px] shrink-0 border-t border-[#a0a0a0] bg-[#efefef]">
          <button type="button" role="tab" aria-selected="true" className="rounded-br border-b border-r border-[#a0a0a0] bg-white pl-1 pr-[3px]">Testdaten</button>
          <button type="button" role="tab" aria-selected="false" className="border-r border-[#a0a0a0] pl-1 pr-px">Beschreibungen</button>
        </div>
      </div>
    </Pane>
  );
}

function Problems() {
  const head = "truncate border-b border-r border-[#d5d5d5] bg-linear-to-b from-white from-40% to-[#f2f4f7] to-40% pl-[6px] pt-[2px] text-left font-normal";
  const cell = "truncate border-b border-r border-[#e6e6e6] pl-[5px] pr-0";
  return (
    <Pane icon={<ProblemsIcon />} title="Fehler" tone="soft" menu className="h-[155px] shrink-0">
      <div className="mx-[2px] mb-[3px] flex min-h-0 flex-1 flex-col">
        <p className="h-6 shrink-0 border-b border-[#a0a0a0] leading-[26px]">0 Fehler, 60 Warnungen, 0 sonstige</p>
        <div className="flex min-h-0 flex-1">
          <div className="min-w-0 flex-1 overflow-hidden bg-white">
            <table className="w-full table-fixed border-separate border-spacing-0">
              <thead>
                <tr className="h-[26px]">
                  <th aria-sort="ascending" className="w-[400px] border border-[#96d9f9] bg-linear-to-b from-[#f2f9fc] from-40% to-[#d8ecf6] pl-[5px] text-left font-normal">
                    <div className="grid items-center">
                      <span className="pt-[2px] [grid-area:1/1]">Beschreibung</span>
                      <span className="self-start justify-self-center [grid-area:1/1]">
                        <Svg w={9} h={5}><path d="M4.500 0 9 5H0z" fill="#5f93b8" /></Svg>
                      </span>
                    </div>
                  </th>
                  <th className={`w-[124px] ${head}`}>Ressource</th>
                  <th className={`w-[164px] ${head}`}>Pfad</th>
                  <th className={`w-[84px] ${head}`}>Position</th>
                  <th className={head}>Typ</th>
                </tr>
              </thead>
              <tbody>
                <tr className="h-[23px]">
                  <td className={`${cell} bg-[#f7f7f7]`}><span className="flex items-center gap-[7px] pl-[19px]"><WarningIcon />Warnungen (60 Elemente)</span></td>
                  <td className={cell} /><td className={cell} /><td className={cell} /><td className={cell} />
                </tr>
                {PROBLEMS.map((p) => (
                  <tr key={p} className="h-[23px]">
                    <td className={`${cell} bg-[#f7f7f7]`}><span className="flex items-center gap-[7px] pl-[38px]"><WarningIcon />{p}</span></td>
                    <td className={cell}>StdLiElementary...</td>
                    <td className={cell}>/com.faktorzehn.ips4f...</td>
                    <td className={cell}>Unbekannt</td>
                    <td className={`${cell} text-clip`}>Faktor-IPS Problem</td>
                  </tr>
                ))}
              </tbody>
            </table>
          </div>
          <VScroll before="flex-[1]" thumb="h-[19px]" after="flex-[20]" />
        </div>
        <HScroll thumb="flex-[96]" after="flex-[2]" />
      </div>
    </Pane>
  );
}

function DragOverlay() {
  return (
    <>
      <div className="pointer-events-none absolute -left-[5px] top-[145px] flex h-[22px] w-[211px] items-center gap-[4px] overflow-hidden whitespace-pre border-t border-[#a8c4e4] bg-[#d9e8fa]/65 pl-[2px] text-black/50">
        <span className="opacity-50"><Ball letter="P"><Cylinder /></Ball></span>
        Verkaufsprodukt 2005-03  1.1
      </div>
      <svg width="140" height="90" viewBox="0 0 140 90" fill="none" aria-hidden="true" className="pointer-events-none absolute -left-[3px] top-[180px]">
        <g stroke="#fb0d0d" strokeWidth="2.500"><path d="M69 81 12 73.500M120 67l5-52" /></g>
        <path d="M1 72 18 67l-4 6.500 2.500 6.500zM126 2l6 17-7-4-8 3z" fill="#fb0d0d" />
      </svg>
      <p className="pointer-events-none absolute left-[82px] top-[256px] font-['DejaVu_Sans',sans-serif] text-xl font-bold leading-6 text-[#fb0d0d]">Drag and Drop</p>
    </>
  );
}

export default function App() {
  return (
    <div className="h-screen bg-black font-['Noto_Sans',sans-serif] text-sm leading-5 text-black">
      <div className="flex h-full flex-col overflow-hidden rounded-t-lg border border-black bg-[#bad1ec] px-2 pb-[7px] shadow-[inset_-1px_-1px_0_#35d0ee]">
        <TitleBar />
        <nav aria-label="Hauptmenü" className="flex h-6 shrink-0 items-center gap-[15px] border-b border-[#b5bcd6] bg-[linear-gradient(#fff,#e9ecf5_37%,#d5dbee_37%,#e2e6f5)] pl-[7px] pt-[2px]">
          {MENUS.map((m) => <button key={m} type="button">{m}</button>)}
        </nav>
        <div className="flex min-h-0 flex-1 flex-col bg-[#efefef]">
          <Toolbar />
          <main className="flex min-h-0 flex-1 gap-[3px] pl-1 pr-px">
            <div className="flex w-[302px] shrink-0 flex-col gap-1">
              <DefinitionExplorer />
              <StructureExplorer />
            </div>
            <div className="relative flex min-w-0 flex-1 flex-col gap-1">
              <Editor />
              <Problems />
              <DragOverlay />
            </div>
            <aside aria-label="Schnellansichten" className="mt-[2px] flex h-[65px] w-[27px] shrink-0 flex-col items-center rounded-b-md border border-[#c4c4c4] pt-[5px]">
              <span className="h-[2px] w-[22px] border-t-2 border-dotted border-[#b4b4b4]" />
              <button type="button" aria-label="Wiederherstellen" className="mt-[10px]">
                <Svg w={10} h={9}><path d="M2.500 3V1.500h6v3H7M2.500 1.500h6M.8 4.500h6V8h-6z" fill="#fff" stroke="#5b5b55" strokeWidth="1.400" /></Svg>
              </button>
              <button type="button" aria-label="Gliederung" className="mt-2">
                <Svg>
                  <rect x="1.500" y="4" width="4" height="4" fill="#eaf6ff" stroke="#2d85bf" />
                  <rect x="1.500" y="10.500" width="4" height="4" fill="#eaf6ff" stroke="#2d85bf" />
                  <path d="M7 6h3M7 12.500h5" stroke="#6fa8cf" />
                  <path d="M12.500 1v2M11 5h2v4.500M10.500 9.500h4.500" stroke="#144f8c" strokeWidth="1.800" />
                </Svg>
              </button>
            </aside>
          </main>
          <footer className="flex h-[30px] shrink-0 items-start pt-[2px]">
            <span className="-ml-px flex"><Grip /></span>
            <Tool label="Schnellansicht öffnen">
              <Svg><rect x="1.500" y="3.500" width="5" height="10.500" fill="#fffbe8" stroke="#8a8a7a" /><rect x="1" y="3" width="6" height="3" fill="#2f77c8" /><path d="M12 .5 13 3.500 15.500 4.500 13 5.500 12 8.500 11 5.500 8.500 4.500 11 3.500z" fill="#fff3c0" stroke="#b98a14" /></Svg>
            </Tool>
            <span className="ml-auto mr-[352px] flex"><Grip /></span>
          </footer>
        </div>
      </div>
    </div>
  );
}
